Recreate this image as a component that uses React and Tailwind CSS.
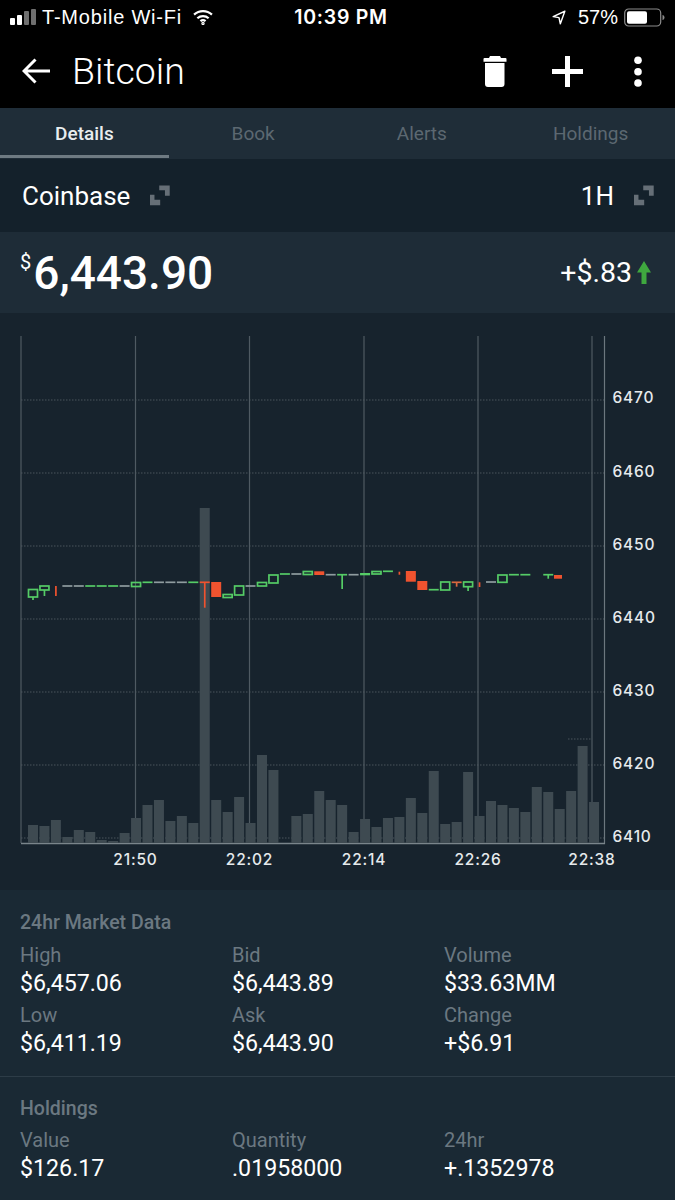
import React from "react";

const bars = [825,826,820,837,830,832,840,841,833,818,805,800,821,816,823,508,800,812,797,823,755,770,null,816,814,791,800,805,832,819,827,818,817,798,813,771,824,822,772,816,801,805,808,812,787,792,809,791,746,802];
const G = "#55cc66", R = "#f0532f", D = "#8f9c9f";
const candles = [
  { i: 0, t: "box", y1: 589.5, y2: 597, w2: 600, c: G },
  { i: 1, t: "box", y1: 586, y2: 590, w2: 596, c: G },
  { i: 2, t: "tick", y1: 586, y2: 596, c: R },
  { i: 3, y: 586, c: D }, { i: 4, y: 586, c: D }, { i: 5, y: 586, c: G }, { i: 6, y: 586, c: G }, { i: 7, y: 586, c: G }, { i: 8, y: 586, c: D },
  { i: 9, t: "box", y1: 582.5, y2: 586.5, c: G },
  { i: 10, y: 582.3, c: G }, { i: 11, y: 582.3, c: D }, { i: 12, y: 582.3, c: D }, { i: 13, y: 582.3, c: D }, { i: 14, y: 582.3, c: G },
  { i: 15, y: 582.3, c: R, w2: 607.7 },
  { i: 16, t: "fill", y1: 582, y2: 597, c: R },
  { i: 17, t: "box", y1: 594.5, y2: 597.5, c: G },
  { i: 18, t: "box", y1: 586, y2: 595, c: G },
  { i: 19, y: 586, c: D },
  { i: 20, t: "box", y1: 582.5, y2: 586, c: G },
  { i: 21, t: "box", y1: 575, y2: 583, c: G },
  { i: 22, y: 574, c: G }, { i: 23, y: 574, c: D },
  { i: 24, t: "box", y1: 571.5, y2: 574.5, c: G },
  { i: 25, t: "fill", y1: 571.3, y2: 575, c: R },
  { i: 26, y: 574.7, c: D },
  { i: 27, y: 574.7, c: G, w2: 589 },
  { i: 28, y: 574.7, c: D },
  { i: 29, t: "fill", y1: 573, y2: 575.3, c: G },
  { i: 30, t: "box", y1: 571.5, y2: 574, c: G },
  { i: 31, y: 571.3, c: G },
  { i: 32, t: "tick", y1: 571.7, y2: 574.7, c: R },
  { i: 33, t: "fill", y1: 571, y2: 581.7, c: R },
  { i: 34, t: "fill", y1: 581, y2: 590, c: R },
  { i: 35, y: 589.7, c: G },
  { i: 36, t: "box", y1: 582, y2: 590, c: G },
  { i: 37, y: 582.3, c: "#d9693f", w2: 586.7 },
  { i: 38, t: "box", y1: 582, y2: 586.7, w2: 591, c: G },
  { i: 39, t: "tick", y1: 582.3, y2: 587, c: R },
  { i: 40, y: 582, c: D },
  { i: 41, t: "box", y1: 575, y2: 582.3, c: G },
  { i: 42, y: 574.7, c: G }, { i: 43, y: 574.7, c: G },
  { i: 45, y: 574.7, c: G, w2: 578.7 },
  { i: 46, t: "fill", y1: 575, y2: 578.7, c: R, x: 558, w: 8 },
];
const yLabels = [[6470, 403], [6460, 476.5], [6450, 550], [6440, 623], [6430, 696], [6420, 769], [6410, 842]];
const gridY = [400, 473, 546, 619, 692, 765, 838];
const gridX = [[135.5, "21:50"], [249.5, "22:02"], [364, "22:14"], [478, "22:26"], [592, "22:38"]];

function Chart() {
  const O = 313;
  return (
    <svg width="675" height="577" viewBox={`0 ${O} 675 577`} className="block">
      <g stroke="#4a555d" strokeWidth="1" strokeDasharray="1.5 1.5">
        {gridY.map((y) => <line key={y} x1="21" x2="604" y1={y} y2={y} />)}
        <line x1="568" x2="592" y1="739" y2="739" />
      </g>
      <g stroke="#4f5a62" strokeWidth="1.2">
        <line x1="21" x2="21" y1="336" y2="843" />
        {gridX.map(([x]) => <line key={x} x1={x} x2={x} y1="336" y2="843" />)}
      </g>
      <line x1="604.5" x2="604.5" y1="336" y2="844" stroke="#6c777e" strokeWidth="1.2" />
      <line x1="21" x2="605" y1="843.5" y2="843.5" stroke="#7a858b" strokeWidth="1.5" />
      <g fill="#3e4a51">
        {bars.map((top, i) => top === null ? null : <rect key={i} x={28 + 11.45 * i} y={top} width="10" height={843 - top} />)}
      </g>
      <g fill="none">
        {candles.map((c) => {
          const x = c.x ?? 33 + 11.45 * c.i;
          const w = c.w ?? 10;
          if (c.t === "box") return (
            <g key={c.i} stroke={c.c} strokeWidth="1.7">
              <rect x={x - 4.5} y={c.y1} width="9" height={c.y2 - c.y1} />
              {c.w2 ? <line x1={x} x2={x} y1={c.y2} y2={c.w2} /> : null}
            </g>
          );
          if (c.t === "fill") return <rect key={c.i} x={x - w / 2} y={c.y1} width={w} height={c.y2 - c.y1} fill={c.c} />;
          if (c.t === "tick") return <line key={c.i} x1={x} x2={x} y1={c.y1} y2={c.y2} stroke={c.c} strokeWidth="1.7" />;
          return (
            <g key={c.i} stroke={c.c} strokeWidth="1.7">
              <line x1={x - 5} x2={x + 5} y1={c.y} y2={c.y} />
              {c.w2 ? <line x1={x} x2={x} y1={c.y} y2={c.w2} /> : null}
            </g>
          );
        })}
      </g>
      <g fill="#e6eaec" fontFamily="Inter, sans-serif" fontSize="15.5" fontWeight="500" letterSpacing="0.8">
        {yLabels.map(([v, y]) => <text key={v} x="612.5" y={y}>{v}</text>)}
        {gridX.map(([x, l]) => <text key={l} x={x} y="865" textAnchor="middle">{l}</text>)}
      </g>
    </svg>
  );
}

function Expand() {
  return (
    <svg width="20" height="21" viewBox="0 0 21 21" fill="#666f77">
      <path d="M9.700 0H20.700V10.700H15.700V5H9.700z" />
      <path d="M0 9.700H4.700V15H10.700V20.700H0z" />
    </svg>
  );
}

function Cell({ label, value }) {
  return (
    <div>
      <div className="h-[26px] text-[20px] leading-[26px] text-[#6b7881]">{label}</div>
      <div className="h-[28px] text-[23.2px] leading-[30px] text-white">{value}</div>
    </div>
  );
}

export default function App() {
  return (
    <div className="w-[675px] h-[1200px] overflow-hidden bg-[#1a2934] font-['Roboto',sans-serif] text-white">
      <header className="bg-black h-[108px]">
        <div className="h-[34px] pl-[10px] pr-[9px] flex items-center">
          <div className="flex-1 flex items-center">
            <svg width="27" height="16" viewBox="0 0 27 16" className="mr-[5px]">
              <rect x="0" y="9" width="5" height="7" rx="1" fill="#fff" />
              <rect x="7" y="6" width="5" height="10" rx="1" fill="#fff" />
              <rect x="14" y="2" width="5" height="14" rx="1" fill="#6f6f6f" />
              <rect x="21" y="0" width="5" height="16" rx="1" fill="#6f6f6f" />
            </svg>
            <span className="text-[20px] leading-[22px] tracking-[0.8px] font-['Liberation_Sans',sans-serif]">T-Mobile Wi-Fi</span>
            <svg width="22" height="16" viewBox="0 0 22 17" className="ml-[10px]" fill="none" stroke="#fff" strokeWidth="2.4">
              <path d="M1.500 6a14 14 0 0 1 19 0" />
              <path d="M5 9.800a9 9 0 0 1 12 0" />
              <path d="M8.300 13a4.200 4.200 0 0 1 5.400 0" />
              <circle cx="11" cy="15.300" r="0.600" fill="#fff" />
            </svg>
          </div>
          <span className="pl-[6px] text-[19.5px] leading-[22px] tracking-[0.7px] font-semibold font-['Inter',sans-serif]">10:39 PM</span>
          <div className="flex-1 flex items-center justify-end">
            <svg width="16" height="15" viewBox="0 0 17 18" fill="none" stroke="#fff" strokeWidth="1.7" strokeLinejoin="round">
              <path d="M15.500 1.500 1.500 8l7 1.200 1.600 7.300z" />
            </svg>
            <span className="ml-[11px] text-[20px] leading-[22px] font-['Liberation_Sans',sans-serif]">57%</span>
            <svg width="42" height="19" viewBox="0 0 42 19" className="ml-[6px]">
              <rect x="0.700" y="1" width="36" height="17" rx="4" fill="none" stroke="#8c8c8c" strokeWidth="1.2" />
              <rect x="3" y="3.200" width="20" height="12.600" rx="2" fill="#fff" />
              <path d="M38.500 7v5c1.300-.3 2-1.300 2-2.500s-.7-2.200-2-2.500z" fill="#8c8c8c" />
            </svg>
          </div>
        </div>
        <div className="h-[74px] pl-[22px] pr-[33px] flex items-center">
          <svg width="28" height="26" viewBox="0 0 28 26" fill="none" stroke="#fff" strokeWidth="3" className="mr-[22px]">
            <path d="M13.500 1.500 2 13l11.500 11.500M2 13h26" />
          </svg>
          <span className="text-[37.500px] leading-[44px] font-light font-['Roboto',sans-serif]">Bitcoin</span>
          <div className="ml-auto flex items-center">
            <svg width="24" height="31" viewBox="0 0 24 31" fill="#fff">
              <path d="M7 0h10l1 2h4.500a1 1 0 0 1 1 1v2.700H.5V3a1 1 0 0 1 1-1H6z" />
              <path d="M2 7h19.500v21a3 3 0 0 1-3 3H5a3 3 0 0 1-3-3z" />
            </svg>
            <svg width="31" height="31" viewBox="0 0 31 31" stroke="#fff" strokeWidth="5" className="ml-[45px]">
              <path d="M15.500 0v31M0 15.500h31" />
            </svg>
            <svg width="8" height="31" viewBox="0 0 8 31" fill="#fff" className="ml-[51px]">
              <circle cx="4" cy="4.200" r="3.800" />
              <circle cx="4" cy="15.800" r="3.800" />
              <circle cx="4" cy="27" r="3.800" />
            </svg>
          </div>
        </div>
      </header>

      <nav className="h-[51px] bg-[#1f2d38] grid grid-cols-4 text-[19px] text-center">
        <div className="h-[50px] border-b-[3px] border-[#6e7a82] leading-[52px] font-medium text-[#e8ecee]">Details</div>
        <div className="h-[50px] leading-[52px] text-[#5c6871]">Book</div>
        <div className="h-[50px] leading-[52px] text-[#5c6871]">Alerts</div>
        <div className="h-[50px] leading-[52px] text-[#5c6871]">Holdings</div>
      </nav>

      <div className="h-[73px] bg-[#14212b] pl-[22px] pr-[21px] flex items-center justify-between">
        <div className="flex items-center gap-[20px]">
          <span className="text-[26px] leading-[30px]">Coinbase</span>
          <Expand />
        </div>
        <div className="flex items-center gap-[20px]">
          <span className="text-[26px] leading-[30px]">1H</span>
          <Expand />
        </div>
      </div>

      <div className="h-[81px] bg-[#1e2c37] pl-[20px] pr-[24px] flex items-center justify-between">
        <div className="flex items-start">
          <span className="text-[20px] leading-[24px] mt-[4px] mr-[2px]">$</span>
          <span className="text-[46px] leading-[54px] font-medium">6,443.90</span>
        </div>
        <div className="flex items-center gap-[5px]">
          <span className="text-[28.500px] leading-[32px]">+$.83</span>
          <svg width="14" height="23" viewBox="0 0 14 23" fill="#3fa83f">
            <path d="M7 0 14 11.500H9.500V23H4.500V11.500H0z" />
          </svg>
        </div>
      </div>

      <section className="h-[577px] bg-[#17232d]">
        <Chart />
      </section>

      <section className="pt-[20px] pb-[20px] px-[20px] border-b border-[#2d3c47]">
        <h2 className="h-[24px] text-[19.500px] leading-[26px] font-medium text-[#6b7881] mb-[8px]">24hr Market Data</h2>
        <div className="grid grid-cols-[212px_212px_1fr] gap-y-[6px]">
          <Cell label="High" value="$6,457.06" />
          <Cell label="Bid" value="$6,443.89" />
          <Cell label="Volume" value="$33.63MM" />
          <Cell label="Low" value="$6,411.19" />
          <Cell label="Ask" value="$6,443.90" />
          <Cell label="Change" value="+$6.91" />
        </div>
      </section>

      <section className="pt-[19px] px-[20px]">
        <h2 className="h-[24px] text-[19.500px] leading-[26px] font-medium text-[#6b7881] mb-[7px]">Holdings</h2>
        <div className="grid grid-cols-[212px_212px_1fr]">
          <Cell label="Value" value="$126.17" />
          <Cell label="Quantity" value=".01958000" />
          <Cell label="24hr" value="+.1352978" />
        </div>
      </section>
    </div>
  );
}
